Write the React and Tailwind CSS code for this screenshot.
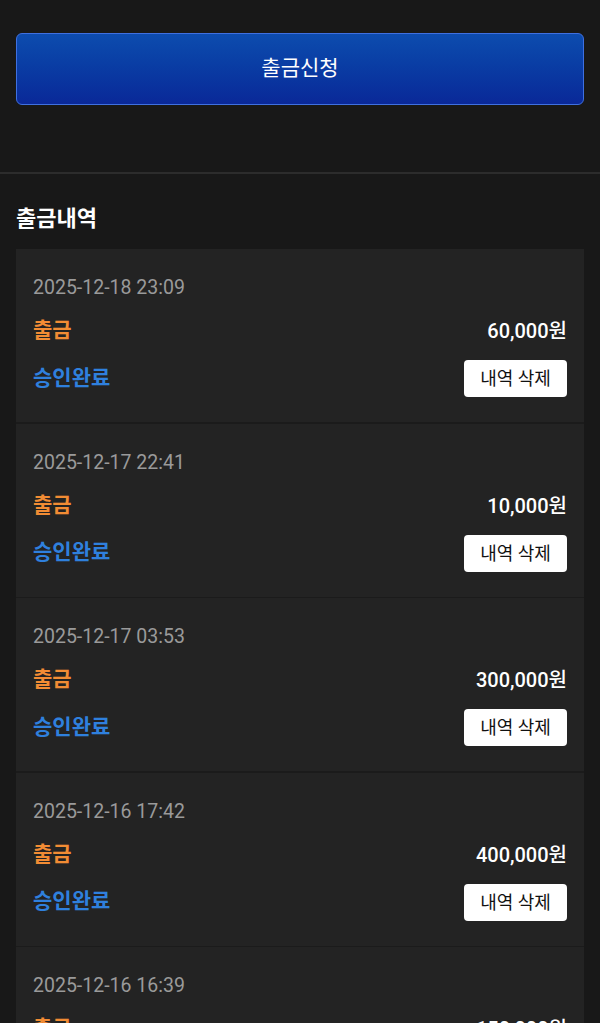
const items = [
  { date: "2025-12-18 23:09", amount: "60,000원" },
  { date: "2025-12-17 22:41", amount: "10,000원" },
  { date: "2025-12-17 03:53", amount: "300,000원" },
  { date: "2025-12-16 17:42", amount: "400,000원" },
  { date: "2025-12-16 16:39", amount: "150,000원" },
];

const font = { fontFamily: "Roboto, 'Noto Sans CJK KR', sans-serif" };

export default function App() {
  return (
    <div className="min-h-screen bg-[#181818] text-white" style={font}>
      <div className="px-4 pt-[33px] pb-[67px]">
        <button className="w-full h-[72px] rounded-[6px] border border-[#3f70e0] bg-gradient-to-b from-[#0d4cae] to-[#0a2898] text-[21px] text-white">
          출금신청
        </button>
      </div>
      <div className="h-[2px] bg-[#2c2c2c]" />
      <div className="px-4 pt-[30px]">
        <h2 className="text-[22px] font-semibold leading-[30px] mb-[15px]">출금내역</h2>
        <div className="flex flex-col gap-[1.5px] bg-[#1b1b1b]">
          {items.map((it, i) => (
            <div key={i} className="bg-[#232323] px-[17px] pt-[27px] pb-[25px]">
              <div className="text-[19.5px] leading-[24px] text-[#9a9a9a]">{it.date}</div>
              <div className="mt-[17px] flex items-center justify-between h-[28px]">
                <span className="text-[21px] font-semibold text-[#f28c34]">출금</span>
                <span className="text-[20px] font-medium">{it.amount}</span>
              </div>
              <div className="mt-[15px] flex items-center justify-between h-[37px]">
                <span className="text-[21px] font-semibold text-[#2f80de]">승인완료</span>
                <button className="h-[37px] w-[103px] rounded-[4px] bg-white text-[18px] text-[#111]">
                  내역 삭제
                </button>
              </div>
            </div>
          ))}
        </div>
      </div>
    </div>
  );
}
